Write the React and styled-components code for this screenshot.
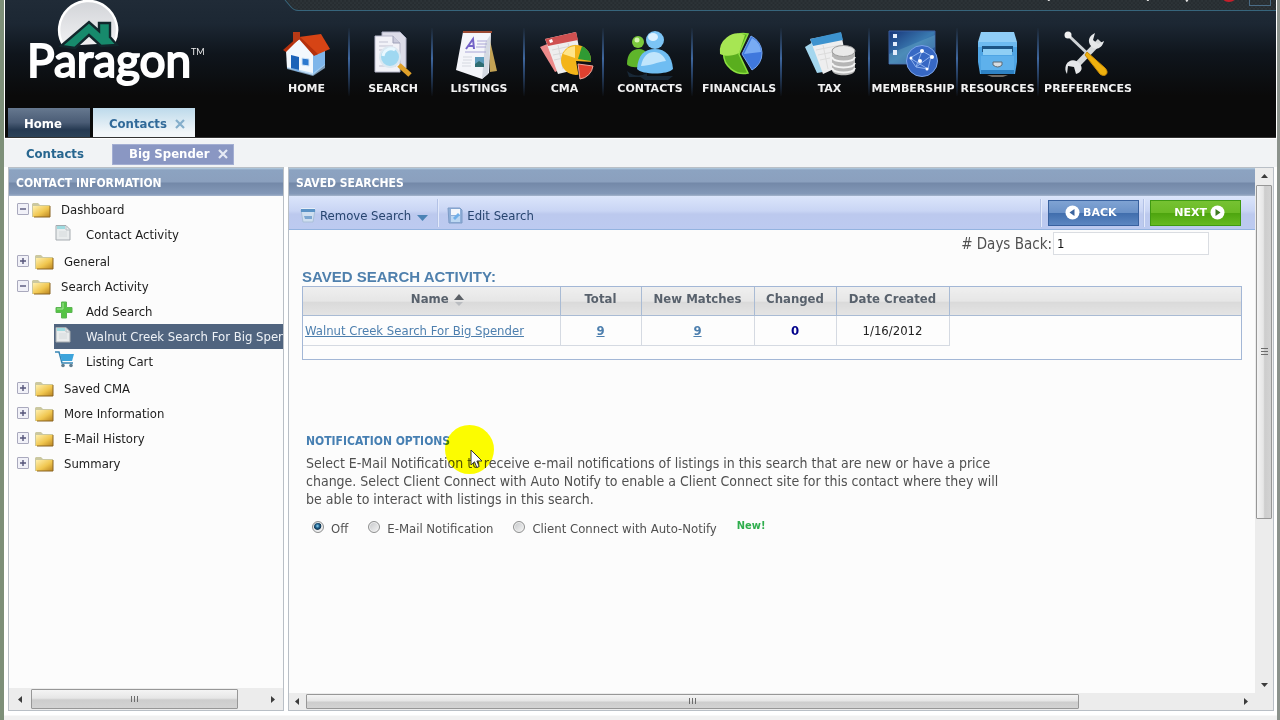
import React, { useState } from 'react';
import styled, { createGlobalStyle, css } from 'styled-components';

const GlobalStyle = createGlobalStyle`
  * {
    box-sizing: border-box;
  }
  body {
    margin: 0;
    font-family: "DejaVu Sans Condensed", "DejaVu Sans", Tahoma, sans-serif;
    font-size: 13px;
    color: #222;
    background: #fff;
  }
  button, input {
    font-family: inherit;
  }
`;

const Desktop = styled.div`
  min-height: 100vh;
  display: flex;
  flex-direction: column;
  border-left: 4px solid #7d8f78;
  border-right: 3px solid #8b928c;
  background: #fff;
  overflow: hidden;
`;

/* ---------- header ---------- */

const Header = styled.header`
  display: flex;
  flex-direction: column;
  height: 138px;
  margin: 0 1px;
  position: relative;
  background: linear-gradient(#202b37 0, #1c2733 24px, #0f151c 54px, #0a0a0a 96px, #0a0a0a 100%);
  border-bottom: 1px solid #333;
`;

const TopStrip = styled.svg`
  position: absolute;
  top: 0;
  right: 0;
  width: calc(100% - 277px);
  height: 12px;
`;

const HeaderRow = styled.div`
  display: flex;
  height: 108px;
`;

const LogoLink = styled.a`
  flex: none;
  width: 258px;
  padding-left: 18px;
  svg {
    display: block;
  }
`;

const Nav = styled.nav`
  display: flex;
  padding-top: 28px;
`;

const NavItem = styled.a`
  width: ${props => props.$width}px;
  height: 68px;
  padding-top: 2px;
  padding-left: ${props => props.$pad || 0}px;
  display: flex;
  flex-direction: column;
  align-items: center;
  color: #f2f2f2;
  font: bold 11px/14px "DejaVu Sans", Verdana, sans-serif;
  text-decoration: none;
  white-space: nowrap;
  border-right: 2px solid transparent;
  border-image: ${props => props.$last ? 'none' : 'linear-gradient(transparent, #3f68a0 45%, #2d4b76 60%, transparent) 1'};

  svg {
    flex: none;
    margin-bottom: 2px;
  }
`;

const Tabs = styled.div`
  display: flex;
  gap: 3px;
  padding-left: 3px;
  flex: 1;
`;

const Tab = styled.div`
  width: ${props => props.$active ? 102 : 82}px;
  display: flex;
  align-items: center;
  padding: 2px 9px 0 16px;
  background: ${props => props.$active
    ? 'linear-gradient(#bddaeb, #f2f6f9 85%)'
    : 'linear-gradient(#66788f, #4a5c75 50%, #263a52 75%, #2c4258)'};

  a {
    flex: 1;
    font-weight: bold;
    color: ${props => props.$active ? '#316a99' : '#fff'};
    text-decoration: none;
  }
`;

const CloseButton = styled.button`
  border: 0;
  padding: 0;
  display: flex;
  background: none;
  color: ${props => props.$color};
  cursor: pointer;
`;

const SubTabs = styled.div`
  display: flex;
  align-items: center;
  height: 29px;
  padding-left: 22px;
  background: #f1f3f5;
  border-top: 1px solid #fff;

  > a {
    width: 86px;
    font-weight: bold;
    color: #27668f;
    text-decoration: none;
  }
`;

const SubTab = styled.div`
  display: flex;
  align-items: center;
  justify-content: space-between;
  width: 122px;
  height: 21px;
  margin-top: 3px;
  padding: 0 4px 2px 16px;
  background: #8a97c3;
  border: 1px solid #a3aed2;

  a {
    font-weight: bold;
    color: #fff;
    text-decoration: none;
  }
`;

/* ---------- panels ---------- */

const Workspace = styled.main`
  flex: 1;
  display: flex;
  gap: 4px;
  padding: 0 3px 0 4px;
`;

const Panel = styled.section`
  display: flex;
  flex-direction: column;
  min-width: 0;
  border: 1px solid #b9bfc6;
  background: #fcfcfc;
  ${props => props.$width ? css`flex: none; width: ${props.$width}px;` : css`flex: 1;`}
`;

const PanelTitle = styled.h2`
  margin: 0;
  height: 28px;
  padding-left: 7px;
  font-size: 12px;
  line-height: 30px;
  color: #fff;
  background: linear-gradient(#b4cde0 0, #8ca3c1 2px, #8ba0be 14px, #7388a8 15px, #8499b8 26px, #a5b5cc);
`;

const Body = styled.div`
  flex: 1;
  display: flex;
  min-height: 0;
`;

const Content = styled.div`
  flex: 1;
  min-width: 0;
`;

const Footer = styled.footer`
  height: 9px;
  background: linear-gradient(#fff 4px, #f1f1f1 5px);
`;

/* ---------- tree ---------- */

const Tree = styled.ul`
  list-style: none;
  flex: 1;
  margin: 0;
  padding: 1px 0 0 8px;
  overflow: hidden;
`;

const Children = styled.ul`
  list-style: none;
  margin: 0 0 2px;
  padding: 0 0 0 37px;
`;

const TreeRow = styled.div`
  display: flex;
  align-items: center;
  height: 25px;
  white-space: nowrap;
`;

const Expander = styled.button`
  width: 12px;
  height: 12px;
  padding: 0;
  margin: -2px ${props => props.$open ? 3 : 6}px 0 0;
  display: flex;
  border: 1px solid #a9a9bd;
  border-radius: 1px;
  background: #f1f1f8;
`;

const TreeLabel = styled.a`
  margin-left: ${props => props.$gap || 10}px;
  color: #1c1c1c;
  text-decoration: none;
`;

const Leaf = styled(TreeRow)`
  ${props => props.$selected && css`
    background: #50647f;
    ${TreeLabel} {
      color: #eef2f7;
    }
  `}
  svg {
    flex: none;
    margin: -4px 0 0 1px;
  }
`;

/* ---------- scroll bars ---------- */

const Bar = styled.div`
  flex: none;
  display: flex;
  background: #ececec;
  ${props => props.$vertical
    ? css`flex-direction: column; width: 18px; padding: 0 1px;`
    : css`height: ${props.$size}px; padding: 1px ${props.$corner || 0}px 1px 0;`}
`;

const ArrowButton = styled.button`
  flex: none;
  display: flex;
  align-items: center;
  justify-content: center;
  padding: 0;
  border: 0;
  background: none;
  ${props => props.$vertical
    ? css`height: 17px;`
    : css`width: ${props.$size}px;`}
`;

const Track = styled.div`
  flex: 1;
  display: flex;
  flex-direction: ${props => props.$vertical ? 'column' : 'row'};
`;

const Thumb = styled.div`
  flex: none;
  flex-basis: ${props => props.$length}%;
  display: flex;
  align-items: center;
  justify-content: center;
  border: 1px solid #979797;
  border-radius: 1px;
  background: linear-gradient(${props => props.$vertical ? 'to right, ' : ''}#f4f4f4, #e6e6e6 45%, #cdcdcd 55%, #d3d3d3);
`;

/* ---------- toolbar ---------- */

const Toolbar = styled.div`
  display: flex;
  align-items: center;
  height: 34px;
  padding: 0 14px 0 5px;
  background: linear-gradient(#dbe5fb, #c9d5f4 45%, #bcc9ee 55%, #bccaf0);
  border-bottom: 1px solid #93b3df;
`;

const ToolButton = styled.button`
  display: flex;
  align-items: center;
  height: 30px;
  padding: 5px 9px 0 6px;
  border: 0;
  background: none;
  font-size: 13px;
  color: #27456f;
  white-space: nowrap;
  span {
    margin: 0 6px 0 4px;
  }
  > svg:last-child {
    margin-top: 4px;
  }
`;

const Divider = styled.i`
  width: 2px;
  height: 28px;
  margin-left: ${props => props.$left || 0}px;
  margin-right: ${props => props.$right || 0}px;
  border-left: 1px solid #b3c2e6;
  border-right: 1px solid #e3eafb;
`;

const Spacer = styled.div`
  flex: 1;
`;

const StepButton = styled.button`
  display: flex;
  align-items: center;
  justify-content: ${props => props.$next ? 'flex-end' : 'flex-start'};
  gap: 3px;
  width: 91px;
  height: 26px;
  padding: 0 15px 0 ${props => props.$next ? 0 : 16}px;
  color: #fff;
  font: bold 11px "DejaVu Sans", Verdana, sans-serif;
  border: 1px solid ${props => props.$next ? '#3f9a12' : '#38619f'};
  background: ${props => props.$next
    ? 'linear-gradient(#76c232, #6bbb26 48%, #4ea50f 52%, #66ba22)'
    : 'linear-gradient(#7fa3d3, #6b92c8 48%, #416ead 52%, #5c87c2)'};
`;

/* ---------- saved searches ---------- */

const Sheet = styled.div`
  padding: 2px 13px 0;
`;

const DaysBack = styled.label`
  display: flex;
  align-items: center;
  justify-content: flex-end;
  padding-right: 33px;
  font-size: 15px;
  color: #505050;

  input {
    width: 156px;
    height: 23px;
    margin-left: 1px;
    padding: 0 3px;
    border: 1px solid #dadde2;
    background: #fff;
    font-size: 13px;
    color: #111;
  }
`;

const SectionTitle = styled.h3`
  margin: 13px 0 1px;
  font: bold 15px/17px "Liberation Sans", Arial, sans-serif;
  color: #4f80ad;
`;

const Grid = styled.div`
  height: 74px;
  border: 1px solid #a3b7d6;
  background: #fdfdfd;
`;

const Table = styled.table`
  width: 100%;
  table-layout: fixed;
  border-collapse: collapse;

  th {
    height: 28px;
    padding: 0 0 4px;
    color: #58616c;
    background: linear-gradient(#efefef, #e6e6e6 50%, #dadada 55%, #e4e4e4);
    border-right: 1px solid #a9bbd4;
    border-bottom: 1px solid #a9bbd4;
    white-space: nowrap;
  }
  th:first-child {
    padding-left: 12px;
  }
  th svg {
    margin-left: 5px;
    vertical-align: middle;
  }
  td {
    height: 30px;
    padding: 0 2px;
    text-align: center;
    border-right: 1px solid #d5dae2;
    border-bottom: 1px solid #d5dae2;
    white-space: nowrap;
  }
  td:first-child {
    text-align: left;
  }
  th:last-child, td:last-child {
    border-right: 0;
  }
  td:last-child {
    border-bottom: 0;
  }
  a {
    color: #4d7fae;
  }
`;

const Changed = styled.b`
  color: #00008b;
`;

const Notification = styled.fieldset`
  position: relative;
  margin: 74px 0 0;
  padding: 0 0 0 4px;
  border: 0;
  color: #505050;

  h3 {
    margin: 0;
    font-size: 12px;
    line-height: 15px;
    color: #467fb2;
  }
  p {
    margin: 5px 0 0;
    font-size: 14px;
    line-height: 18px;
  }
`;

const Options = styled.div`
  display: flex;
  align-items: center;
  margin-top: 13px;
  padding-left: 6px;
`;

const Option = styled.label`
  display: flex;
  align-items: center;
  margin-right: 20px;

  input {
    appearance: none;
    flex: none;
    width: 12px;
    height: 12px;
    margin: -4px 7px 0 0;
    border: 1px solid #8e8f8f;
    border-radius: 50%;
    background: linear-gradient(135deg, #c4c6c8, #f6f6f6);
    box-shadow: inset 0 0 0 1px #f0f0f0;
  }
  input:checked {
    background: radial-gradient(circle at 45% 40%, #8fd6f2 0, #1e5f8c 25%, #123650 42%, #e8eaec 52%);
  }
`;

const NewTag = styled.strong`
  margin-top: -6px;
  font-size: 11px;
  color: #2fae4d;
`;

const Highlight = styled.i`
  position: absolute;
  left: 143px;
  top: -9px;
  width: 49px;
  height: 49px;
  border-radius: 50%;
  background: #ffff00;
  mix-blend-mode: multiply;
`;

const Pointer = styled.svg`
  position: absolute;
  left: 168px;
  top: 15px;
`;

/* ---------- icons ---------- */

const Cross = () => (
  <svg width="12" height="12" viewBox="0 0 12 12" stroke="currentColor" strokeWidth="2.2">
    <path d="M2 2l8 8M10 2l-8 8" />
  </svg>
);

const Logo = () => (
  <svg width="185" height="92" viewBox="0 0 185 92">
    <defs>
      <linearGradient id="moon" x1="0" y1="0" x2="0" y2="1">
        <stop offset="0" stopColor="#d2d4d8" />
        <stop offset="1" stopColor="#f1f1f3" />
      </linearGradient>
    </defs>
    <path d="M41 46A29 29 0 1 1 91 43" fill="url(#moon)" stroke="#fff" strokeWidth="2.5" />
    <path d="M38 46L66 22l10 9v-8h11v14l7 8-16 1-12-11-14 13z" fill="#178a6c" stroke="#12272c" strokeWidth="2.4" />
    <text x="4" y="77" fontFamily="Lato, sans-serif" fontSize="46" fill="#fff" stroke="#fff" strokeWidth="2">Paragon</text>
    <text x="168" y="55" fontFamily="Lato, sans-serif" fontSize="9" fill="#eee">TM</text>
  </svg>
);

const HomeIcon = () => (
  <>
    <path d="M4 21L17 7l14 17v21L5 38z" fill="#f3f8fd" />
    <path d="M31 24l12-6v17L31 45z" fill="#7fb6ea" />
    <path d="M17 7l22-3 9 15-14 6z" fill="#d64415" />
    <path d="M17 6L1 20l3 2L17 9l15 17 4-2z" fill="#b5300c" />
    <path d="M11 2h7v7l-7 5z" fill="#b83a16" />
    <path d="M9 25l8 2v15l-8-3z" fill="#1b62b8" />
    <path d="M20 28l7 1v7l-7-1z" fill="#2c79cf" stroke="#cfe3f7" />
    <path d="M5 37l26 6 12-9v4l-12 8-26-7z" fill="#a8d2f5" opacity=".7" />
  </>
);

const SearchIcon = () => (
  <>
    <path d="M14 2h18l6 6v30H14z" fill="#dcdce8" stroke="#aeb0c4" />
    <path d="M7 6h18l7 7v29H7z" fill="#f2f2f8" stroke="#b7b8cb" />
    <path d="M25 6v7h7" fill="#c9cadb" stroke="#9fa1b8" />
    <path d="M11 12h9M11 16h14M11 20h14M11 36h17" stroke="#c2c3d3" />
    <path d="M31 35l11 10" stroke="#e0a12a" strokeWidth="5" />
    <circle cx="22" cy="27" r="10" fill="#9fd8f1" stroke="#dce8f1" strokeWidth="2" />
    <path d="M15 26a8 8 0 0 1 12-6" fill="none" stroke="#e9f8ff" strokeWidth="3" />
  </>
);

const ListingsIcon = () => (
  <>
    <path d="M35 6l8 35-7 1z" fill="#c3a254" />
    <path d="M9 2h28l-2 41-7 6L2 40z" fill="#f4f5fa" />
    <path d="M9 1h29v2H9z" fill="#9c4a33" />
    <path d="M37 4l-3 40-6 5 3-36z" fill="#d4d9e2" />
    <path d="M12 19l7-10 1 10M14 16h6" fill="none" stroke="#7463c8" strokeWidth="2" />
    <path d="M23 11h10M23 14h10M22 17h10M11 22h21" stroke="#a9a6d6" />
    <path d="M9 27h9M9 30h9M8 33h9M8 36h9" stroke="#d5d8e0" />
    <path d="M21 27h9v10h-9z" fill="#5e9cbd" />
    <path d="M21 34l4-3 5 3v3h-9z" fill="#2f6d72" />
  </>
);

const CmaIcon = () => (
  <>
    <path d="M0 17l12-5 8 28-5 2z" fill="#ec8b8b" />
    <path d="M5 9l31-7 7 36-25 6z" fill="#eeeeee" />
    <path d="M5 9l31-7 2 8L8 16z" fill="#cf5050" />
    <path d="M9 10l3-1 1 3-3 1z" fill="#fff" />
    <path d="M12 20l24-5M13 25l25-5M14 30l14-3M18 15l5 24M28 13l2 9" stroke="#d8d8d8" />
    <circle cx="36" cy="30" r="15" fill="#f3b41a" />
    <path d="M23 24a15 15 0 0 1 12-8v12z" fill="#ffe58a" />
    <path d="M38 29l4-13a15 15 0 0 1 9 15z" fill="#2f9a33" />
    <path d="M36 31l17 1v16H39z" fill="#0d1116" />
    <path d="M38 34l15 2a15 15 0 0 1-13 13z" fill="#e0412f" stroke="#f0a79b" />
  </>
);

const ContactsIcon = () => (
  <>
    <path d="M2 41q10 8 20 2v4H4zM14 46h34l-5 4H20z" fill="#3a6fa0" opacity=".25" />
    <circle cx="13" cy="12" r="6" fill="#7bc93c" />
    <path d="M2 34c0-10 5-15 12-15s9 5 9 11l-6 7c-9 1-15-1-15-3z" fill="#5fb52b" />
    <circle cx="12" cy="10" r="2.5" fill="#d6f5b3" />
    <path d="M12 39c1-14 7-20 18-20s17 7 18 20c-5 6-31 6-36 0z" fill="#6fbdf2" />
    <path d="M16 36c2-10 7-14 13-14s10 4 12 9c-9 1-16 5-25 5z" fill="#c0e5fc" />
    <circle cx="30" cy="10" r="9" fill="#7cc4f5" />
    <ellipse cx="28" cy="7" rx="5" ry="4" fill="#dbf1ff" />
  </>
);

const FinancialsIcon = () => (
  <>
    <path d="M34 4A20 20 0 1 0 34 43L25 24z" fill="#5aae1e" stroke="#8be03f" strokeWidth="1.5" />
    <path d="M31 5A18 18 0 0 0 6 24c6 3 13 2 19-1z" fill="#a7e653" />
    <path d="M37 6a19 19 0 0 1 1 34L28 24z" fill="#3f78dd" stroke="#75a6f2" />
    <path d="M38 8a17 17 0 0 1 9 14l-17 2z" fill="#78abf3" />
  </>
);

const TaxIcon = () => (
  <>
    <path d="M0 17l8-5 10 30-6 1z" fill="#a4d7ef" />
    <path d="M5 9l31-6 6 30-24 11z" fill="#eeeeef" />
    <path d="M5 9l31-7 2 8L8 16z" fill="#3d93cf" />
    <path d="M11 20l25-5M13 25l20-4M15 30l10-2M18 15l5 24" stroke="#dcdcdc" />
    <path d="M27 22v18c0 7 23 7 23 0V22z" fill="#b5b5b5" />
    <ellipse cx="38.5" cy="21" rx="11.5" ry="5.5" fill="#e9e9e9" stroke="#9c9c9c" />
    <path d="M27 27c2 6 21 6 23 0M27 33c2 6 21 6 23 0M27 38c2 6 21 6 23 0" fill="none" stroke="#f3f3f3" strokeWidth="2" />
  </>
);

const MembershipIcon = () => (
  <>
    <defs>
      <linearGradient id="board" x1="0" y1="0" x2="1" y2="1">
        <stop offset="0" stopColor="#17357a" />
        <stop offset=".5" stopColor="#3a7ab0" />
        <stop offset="1" stopColor="#1b3f8f" />
      </linearGradient>
    </defs>
    <path d="M1 1h46v33H1z" fill="url(#board)" stroke="#3b5f9f" />
    <path d="M1 24L47 5v12L20 34H1z" fill="#6fb0c9" opacity=".35" />
    <path d="M5 4h4v4H5zM5 12h4v4H5zM5 20h4v5H5z" fill="#e5eefc" />
    <circle cx="34" cy="31" r="15.5" fill="#3768c4" stroke="#7ba3e8" />
    <path d="M22 28l12-7 9 5-3 13-12-2zM34 21l-6 16M22 28l18 11M43 26l-15 11" fill="none" stroke="#8fb3ee" />
    <circle cx="34" cy="21" r="2" fill="#fff" />
    <circle cx="32" cy="31" r="2" fill="#fff" />
    <circle cx="44" cy="27" r="2" fill="#fff" />
    <circle cx="23" cy="28" r="1.5" fill="#fff" />
    <circle cx="39" cy="39" r="1.5" fill="#fff" />
  </>
);

const ResourcesIcon = () => (
  <>
    <path d="M8 2h33l3 10H5z" fill="#8fcdf6" />
    <path d="M5 12h39v20l-2 12H7L5 32z" fill="#4fa5e4" />
    <path d="M5 12h39v5H5z" fill="#6dbaf0" />
    <path d="M9 16h31v6H9z" fill="#1c5484" />
    <path d="M10 19h29v6H10z" fill="#8fcff5" />
    <path d="M8 26h33v17H8z" fill="#5eb1ec" />
    <path d="M8 40h33v4H8z" fill="#2e82c4" />
    <path d="M20 32h9v3q-4 4-9 0z" fill="#d7dde2" stroke="#5d6b76" />
    <path d="M14 45h21l-5 2H19z" fill="#6f6a64" />
  </>
);

const PreferencesIcon = () => (
  <>
    <path d="M12 37L37 11" stroke="#d6d9db" strokeWidth="6" />
    <path d="M32 3c-6 3-8 8-4 13 4 5 11 3 13-5l-6 3-5-4zM17 34c-4-5-11-5-14 1-1 3-1 6 1 9l1-8 6 1 2 7c6-2 7-6 4-10z" fill="#e5e7e9" />
    <path d="M5 5l21 20" stroke="#cfd3d6" strokeWidth="3" />
    <circle cx="5" cy="5" r="3.5" fill="#f2f2f2" />
    <path d="M24 22l18 16c5 5 0 10-5 6L22 25z" fill="#efb10e" stroke="#c98a06" />
  </>
);

const Folder = () => (
  <svg width="19" height="16" viewBox="0 0 19 16">
    <defs>
      <linearGradient id="fold" x1="0" y1="0" x2="1" y2="1">
        <stop offset="0" stopColor="#fff0ae" />
        <stop offset=".55" stopColor="#f0c64f" />
        <stop offset="1" stopColor="#b98320" />
      </linearGradient>
    </defs>
    <path d="M0 2l1-1h5l2 2h10v12H0z" fill="#cbc8a0" />
    <path d="M1 4h17v11H1z" fill="url(#fold)" />
    <path d="M18 4v11H2" fill="none" stroke="#8a6422" />
  </svg>
);

const PageIcon = () => (
  <svg width="16" height="16" viewBox="0 0 16 16">
    <path d="M1 .5h10l4 4V15H1z" fill="#e9eced" stroke="#a5abb0" />
    <path d="M2 1h8v3H2z" fill="#9fdbe0" />
    <path d="M11 1v4h4" fill="none" stroke="#b9bfc3" />
    <path d="M4 7h8M4 9h8M4 11h8" stroke="#d5dadc" />
  </svg>
);

const PlusIcon = () => (
  <svg width="18" height="18" viewBox="0 0 18 18">
    <path d="M6.5 1h5v5.500H17v5h-5.500V17h-5v-5.500H1v-5h5.500z" fill="#55c444" stroke="#5db553" />
    <path d="M8 2v6H2" fill="none" stroke="#a5e59a" />
  </svg>
);

const CartIcon = () => (
  <svg width="20" height="17" viewBox="0 0 20 17">
    <path d="M0 1h4l3 11h11" fill="none" stroke="#3685b4" strokeWidth="1.5" />
    <path d="M5 3h14l-2 7H7z" fill="#3da4db" />
    <circle cx="8" cy="14.5" r="1.8" fill="#5f7d90" />
    <circle cx="16" cy="14.5" r="1.8" fill="#5f7d90" />
  </svg>
);

const BinIcon = () => (
  <svg width="16" height="16" viewBox="0 0 16 16">
    <path d="M1 3h14l-2 12H3z" fill="#cfdff0" stroke="#a9bfd9" />
    <path d="M1 2h14v3H1z" fill="#5b93c6" />
    <path d="M1 1.5h14" stroke="#e6eef8" />
    <path d="M4 9h8v3H5z" fill="#7ba6d0" />
  </svg>
);

const EditIcon = () => (
  <svg width="16" height="17" viewBox="0 0 16 17">
    <path d="M1 1h12l2 2v13H2z" fill="#8fafd8" stroke="#7c9bc6" />
    <path d="M4 2h9v6H4z" fill="#f3f7fc" />
    <path d="M4 9h9v6H4z" fill="#bcd7f2" />
    <path d="M6 11l5-5 2 2-5 5z" fill="#6fb0ea" />
  </svg>
);

const ArrowDisc = ({ left }) => (
  <svg width="15" height="15" viewBox="0 0 15 15">
    <circle cx="7.5" cy="7.5" r="7" fill="#fff" />
    <path d={left ? 'M9.5 4v7L4.5 7.5z' : 'M5.5 4v7l5-3.5z'} fill={left ? '#3c659f' : '#3f7a22'} />
  </svg>
);

const arrows = {
  left: 'M6 1v7L2 4.5z',
  right: 'M3 1v7l4-3.5z',
  up: 'M1 6h7L4.5 2z',
  down: 'M1 3h7L4.5 7z',
};

const Arrow = ({ dir }) => (
  <svg width="9" height="9" viewBox="0 0 9 9">
    <path d={arrows[dir]} fill="#3c3c3c" />
  </svg>
);

const Grip = ({ vertical }) => (
  <svg width="9" height="9" viewBox="0 0 9 9">
    <path d={vertical ? 'M1 1.5h7M1 4.5h7M1 7.5h7' : 'M1.5 1v6M4.5 1v6M7.5 1v6'} stroke="#6c6c6c" />
  </svg>
);

/* ---------- components ---------- */

const ScrollBar = ({ vertical, size, arrow, corner, length }) => (
  <Bar $vertical={vertical} $size={size} $corner={corner}>
    <ArrowButton $vertical={vertical} $size={arrow} aria-label={vertical ? 'Scroll up' : 'Scroll left'}>
      <Arrow dir={vertical ? 'up' : 'left'} />
    </ArrowButton>
    <Track $vertical={vertical}>
      <Thumb $vertical={vertical} $length={length}><Grip vertical={vertical} /></Thumb>
    </Track>
    <ArrowButton $vertical={vertical} $size={arrow} aria-label={vertical ? 'Scroll down' : 'Scroll right'}>
      <Arrow dir={vertical ? 'down' : 'right'} />
    </ArrowButton>
  </Bar>
);

const menu = [
  { name: 'HOME', width: 87, pad: 2, icon: <HomeIcon /> },
  { name: 'SEARCH', width: 83, pad: 5, icon: <SearchIcon /> },
  { name: 'LISTINGS', width: 92, pad: 2, icon: <ListingsIcon /> },
  { name: 'CMA', width: 79, pad: 2, icon: <CmaIcon /> },
  { name: 'CONTACTS', width: 89, pad: 5, icon: <ContactsIcon /> },
  { name: 'FINANCIALS', width: 89, pad: 5, icon: <FinancialsIcon /> },
  { name: 'TAX', width: 88, pad: 9, icon: <TaxIcon /> },
  { name: 'MEMBERSHIP', width: 88, icon: <MembershipIcon /> },
  { name: 'RESOURCES', width: 81, icon: <ResourcesIcon /> },
  { name: 'PREFERENCES', width: 100, last: true, icon: <PreferencesIcon /> },
];

const folders = [
  { name: 'Dashboard', open: true, items: [{ name: 'Contact Activity', icon: <PageIcon />, gap: 15 }] },
  { name: 'General' },
  {
    name: 'Search Activity',
    open: true,
    items: [
      { name: 'Add Search', icon: <PlusIcon />, gap: 13 },
      { name: 'Walnut Creek Search For Big Spender', icon: <PageIcon />, gap: 15, selected: true },
      { name: 'Listing Cart', icon: <CartIcon />, gap: 11 },
    ],
  },
  { name: 'Saved CMA' },
  { name: 'More Information' },
  { name: 'E-Mail History' },
  { name: 'Summary' },
];

const options = ['Off', 'E-Mail Notification', 'Client Connect with Auto-Notify'];

const FolderNode = ({ name, open, items = [] }) => (
  <li>
    <TreeRow>
      <Expander $open={open} aria-label={open ? 'Collapse' : 'Expand'}>
        <svg width="10" height="10" viewBox="0 0 10 10">
          <path d={open ? 'M2 5h6' : 'M2 5h6M5 2v6'} stroke="#55557a" strokeWidth="1.4" />
        </svg>
      </Expander>
      <Folder />
      <TreeLabel href="#">{name}</TreeLabel>
    </TreeRow>
    {open && (
      <Children>
        {items.map(item => (
          <li key={item.name}>
            <Leaf $selected={item.selected}>
              {item.icon}
              <TreeLabel href="#" $gap={item.gap}>{item.name}</TreeLabel>
            </Leaf>
          </li>
        ))}
      </Children>
    )}
  </li>
);

const App = () => {
  const [notify, setNotify] = useState('Off');
  const [days, setDays] = useState('1');

  return (
    <Desktop>
      <GlobalStyle />
      <Header>
        <TopStrip viewBox="0 0 993 12" preserveAspectRatio="xMinYMin slice">
          <defs>
            <pattern id="mesh" width="4" height="4" patternUnits="userSpaceOnUse">
              <path d="M0 0h4v4H0z" fill="#2d3438" />
              <path d="M0 0h2v2H0zM2 2h2v2H2z" fill="#262c30" />
            </pattern>
          </defs>
          <path d="M3 0l6 7q3 3.500 7 3.500h977V0z" fill="url(#mesh)" />
          <path d="M3 0l6 7q3 3.500 7 3.500h977" fill="none" stroke="#37657c" />
          <path d="M766 0v1M865 0v1M905 0l-2 1" stroke="#ddd" strokeWidth="2" />
          <circle cx="946" cy="-7" r="9" fill="#c61f2b" />
          <path d="M966.5 0v5.500h21V0" fill="none" stroke="#4b6c86" />
        </TopStrip>
        <HeaderRow>
          <LogoLink href="#" aria-label="Paragon"><Logo /></LogoLink>
          <Nav>
            {menu.map(item => (
              <NavItem key={item.name} href="#" $width={item.width} $pad={item.pad} $last={item.last}>
                <svg width="50" height="50" viewBox="0 0 50 50" overflow="visible">{item.icon}</svg>
                {item.name}
              </NavItem>
            ))}
          </Nav>
        </HeaderRow>
        <Tabs>
          <Tab><a href="#">Home</a></Tab>
          <Tab $active>
            <a href="#">Contacts</a>
            <CloseButton $color="#84aecb" aria-label="Close Contacts"><Cross /></CloseButton>
          </Tab>
        </Tabs>
      </Header>
      <SubTabs>
        <a href="#">Contacts</a>
        <SubTab>
          <a href="#">Big Spender</a>
          <CloseButton $color="#e6eaf5" aria-label="Close Big Spender"><Cross /></CloseButton>
        </SubTab>
      </SubTabs>

      <Workspace>
        <Panel $width={276}>
          <PanelTitle>CONTACT INFORMATION</PanelTitle>
          <Tree>
            {folders.map(folder => <FolderNode key={folder.name} {...folder} />)}
          </Tree>
          <ScrollBar size={22} arrow={22} length={90} />
        </Panel>

        <Panel>
          <Body>
            <Content>
              <PanelTitle>SAVED SEARCHES</PanelTitle>
              <Toolbar>
                <ToolButton>
                  <BinIcon />
                  <span>Remove Search</span>
                  <svg width="11" height="7" viewBox="0 0 11 7"><path d="M0 1h11L5.5 7z" fill="#4b83b5" /></svg>
                </ToolButton>
                <Divider $right={2} />
                <ToolButton>
                  <EditIcon />
                  <span>Edit Search</span>
                </ToolButton>
                <Spacer />
                <Divider $right={6} />
                <StepButton><ArrowDisc left />BACK</StepButton>
                <Divider $left={4} $right={5} />
                <StepButton $next>NEXT<ArrowDisc /></StepButton>
              </Toolbar>
              <Sheet>
                <DaysBack>
                  # Days Back:
                  <input type="text" value={days} onChange={e => setDays(e.target.value)} />
                </DaysBack>
                <SectionTitle>SAVED SEARCH ACTIVITY:</SectionTitle>
                <Grid>
                  <Table>
                    <colgroup>
                      <col width="257" />
                      <col width="81" />
                      <col width="113" />
                      <col width="82" />
                      <col width="113" />
                      <col />
                    </colgroup>
                    <thead>
                      <tr>
                        <th>
                          Name
                          <svg width="10" height="12" viewBox="0 0 10 12">
                            <path d="M0 6h10L5 0z" fill="#5b6066" />
                            <path d="M1 8h8l-4 4z" fill="#b9bcc0" />
                          </svg>
                        </th>
                        <th>Total</th>
                        <th>New Matches</th>
                        <th>Changed</th>
                        <th>Date Created</th>
                        <th />
                      </tr>
                    </thead>
                    <tbody>
                      <tr>
                        <td><a href="#">Walnut Creek Search For Big Spender</a></td>
                        <td><b><a href="#">9</a></b></td>
                        <td><b><a href="#">9</a></b></td>
                        <td><Changed>0</Changed></td>
                        <td>1/16/2012</td>
                        <td />
                      </tr>
                    </tbody>
                  </Table>
                </Grid>
                <Notification>
                  <h3>NOTIFICATION OPTIONS</h3>
                  <p>
                    Select E-Mail Notification to receive e-mail notifications of listings in this search that are new or have a price<br />
                    change. Select Client Connect with Auto Notify to enable a Client Connect site for this contact where they will<br />
                    be able to interact with listings in this search.
                  </p>
                  <Options>
                    {options.map(option => (
                      <Option key={option}>
                        <input
                          type="radio"
                          name="notify"
                          checked={notify === option}
                          onChange={() => setNotify(option)}
                        />
                        {option}
                      </Option>
                    ))}
                    <NewTag>New!</NewTag>
                  </Options>
                  <Highlight />
                  <Pointer width="13" height="20" viewBox="0 0 13 20">
                    <path d="M1 1v15l3.500-3.200 2.300 5.700 2.400-1-2.300-5.500H12z" fill="#fff" stroke="#333" />
                  </Pointer>
                </Notification>
              </Sheet>
            </Content>
            <ScrollBar vertical length={68} />
          </Body>
          <ScrollBar size={17} arrow={17} corner={19} length={83} />
        </Panel>
      </Workspace>
      <Footer />
    </Desktop>
  );
};

export default App;
